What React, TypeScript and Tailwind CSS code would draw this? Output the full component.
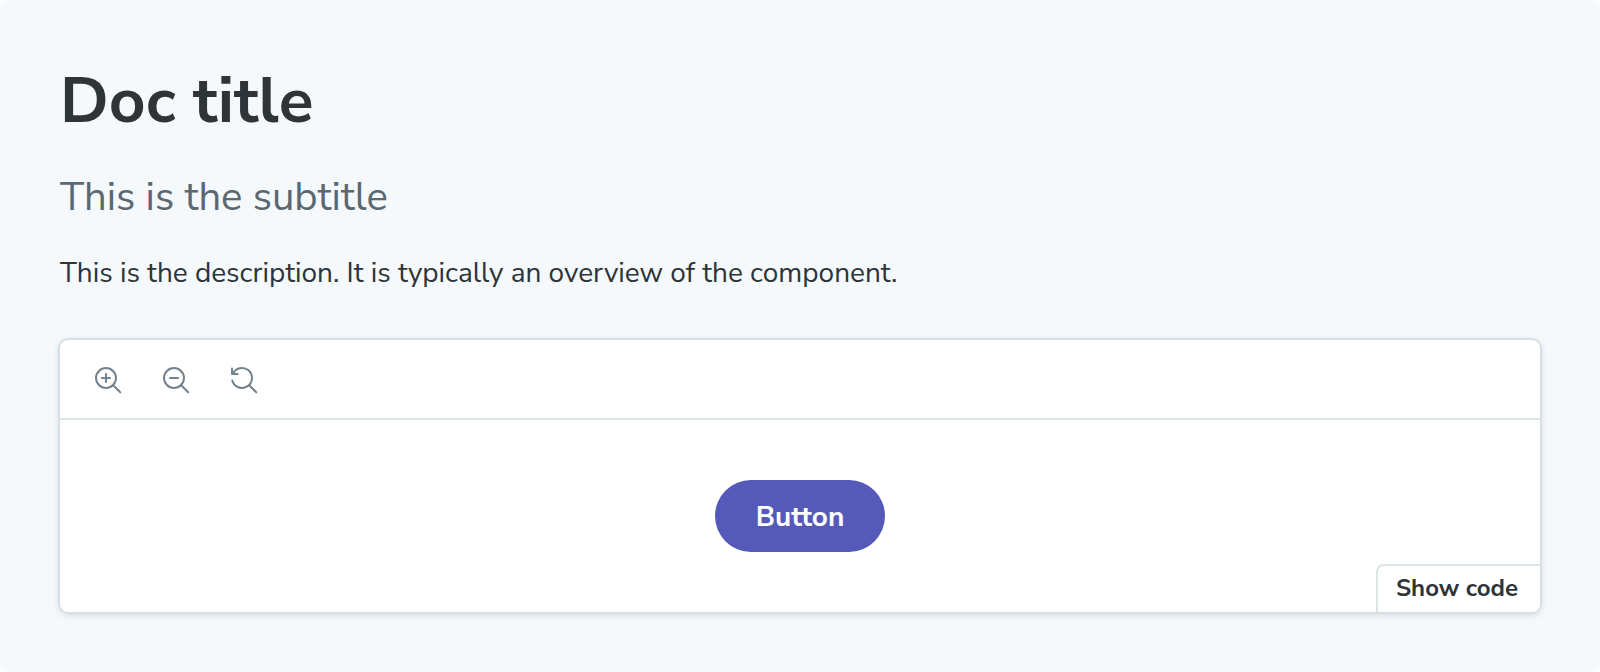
import type { ReactNode } from 'react';

function ZoomGlyph({ children }: { children: ReactNode }) {
  return (
    <svg
      viewBox="0 0 14 14"
      className="size-7"
      fill="none"
      stroke="currentColor"
      strokeLinecap="round"
      strokeLinejoin="round"
      aria-hidden="true"
    >
      {children}
      <path d="M9.6 9.6L13.1 13.1" />
    </svg>
  );
}

function ToolButton({ label, children }: { label: string; children: ReactNode }) {
  return (
    <button type="button" aria-label={label} className="text-[#73828c]">
      <ZoomGlyph>{children}</ZoomGlyph>
    </button>
  );
}

function Toolbar() {
  return (
    <div className="flex items-center gap-10 border-b-2 border-[#dde4e8] px-[34px] pb-6 pt-[26px]">
      <ToolButton label="Zoom in">
        <circle cx="6" cy="6" r="5" />
        <path d="M6 4v4M4 6h4" />
      </ToolButton>
      <ToolButton label="Zoom out">
        <circle cx="6" cy="6" r="5" />
        <path d="M4 6h4" />
      </ToolButton>
      <ToolButton label="Reset zoom">
        <path d="M1.4 4A5 5 0 1 1 1.15 7.2" />
        <path d="M1 1.2V4H3.8" />
      </ToolButton>
    </div>
  );
}

function Preview() {
  return (
    <section className="mt-[43px] overflow-hidden rounded-[10px] border-2 border-[#d7dfe6] bg-white shadow-[0_2px_6px_rgba(0,0,0,0.10)]">
      <Toolbar />
      <div className="relative flex justify-center py-[60px]">
        <button
          type="button"
          className="h-[72px] rounded-full bg-[#555ab9] px-[41px] pt-0.5 text-[28px] font-bold leading-8 text-white"
        >
          Button
        </button>
        <button
          type="button"
          className="absolute bottom-0 right-0 h-12 rounded-tl-lg border-l-2 border-t-2 border-[#dde4e8] bg-white pb-0.5 pl-[18px] pr-[22px] text-2xl font-bold leading-8 text-[#2e3438]"
        >
          Show code
        </button>
      </div>
    </section>
  );
}

export default function App() {
  return (
    <main className="rounded-[10px] bg-[#f5f9fc] px-[58px] pb-[58px] pt-[65px] font-['Nunito_Sans','Nunito','Lato',sans-serif] text-[#2e3438]">
      <header className="px-0.5">
        <h1 className="text-[64px] font-bold leading-[72px]">Doc title</h1>
        <p className="mt-9 text-[40px] leading-[48px] text-[#5c6870]">This is the subtitle</p>
        <p className="mt-[30px] text-[28px] leading-[44px]">
          This is the description. It is typically an overview of the component.
        </p>
      </header>
      <Preview />
    </main>
  );
}
